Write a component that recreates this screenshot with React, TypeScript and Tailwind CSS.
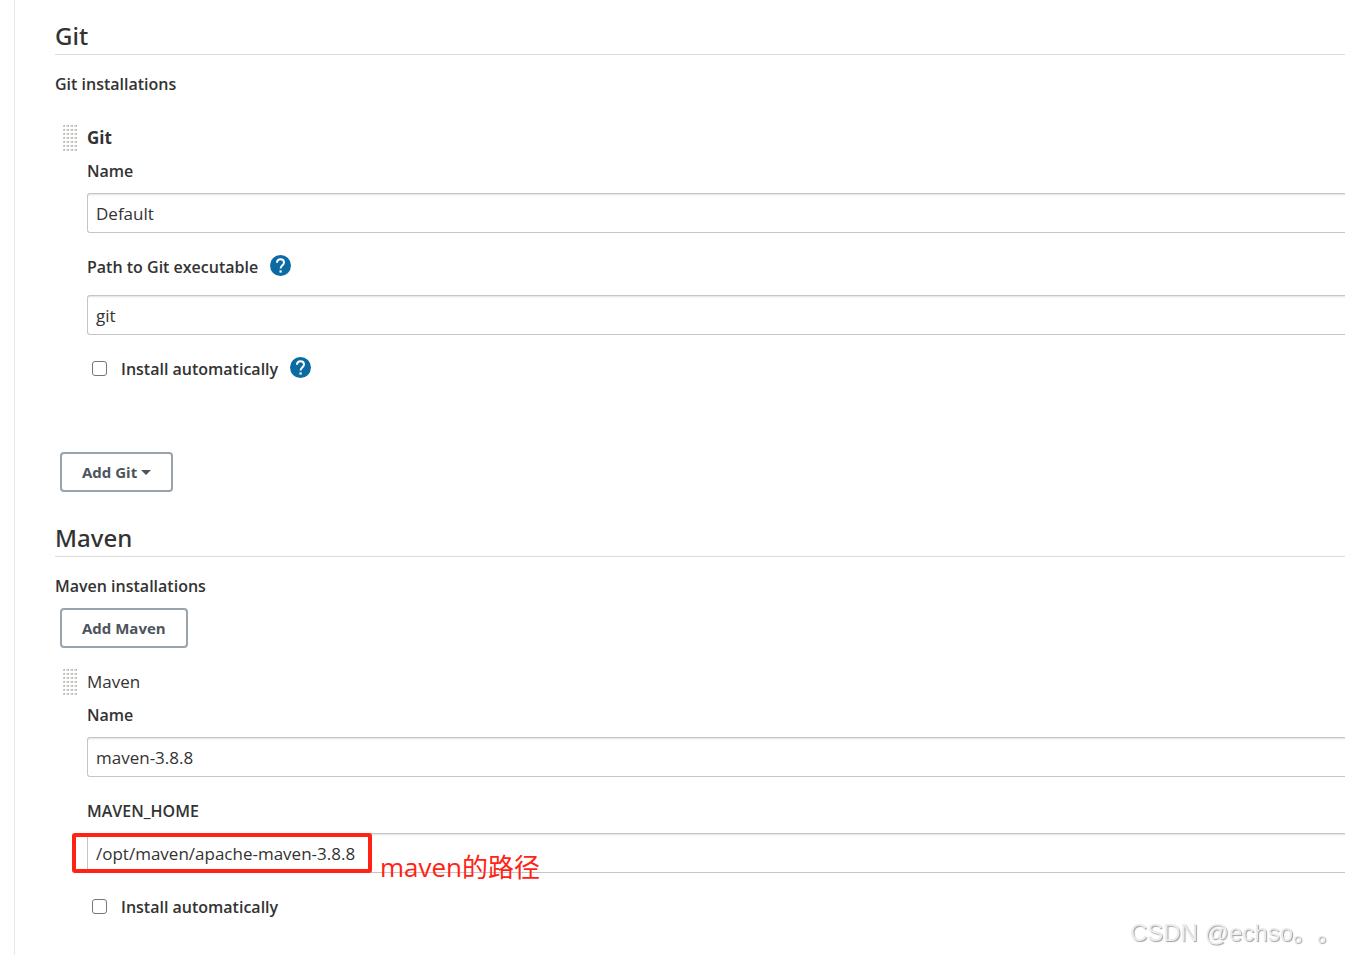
import type { ReactNode } from 'react';

const INPUT_CLASS =
  'block h-10 w-full rounded-l-[3px] border border-r-0 border-[#c5c5c5] bg-white px-2 text-[17px] text-[#333] shadow-[inset_0_2px_2px_-1px_rgba(0,0,0,0.12)] outline-none';

function DragHandle() {
  const rows = [0, 4, 8, 12, 16, 20, 24];
  const cols = [0, 4, 8, 12];
  return (
    <svg width="14" height="26" viewBox="0 0 14 26" className="shrink-0" aria-hidden="true">
      {rows.map((y) =>
        cols.map((x) => (
          <g key={`${x}-${y}`}>
            <rect x={x - 1} y={y} width="3" height="2" fill="#e3e2df" />
            <rect x={x} y={y} width="2" height="2" fill="#cfcdc9" />
            <rect x={x + 1} y={y} width="1" height="1" fill="#b0aeaa" />
          </g>
        ))
      )}
    </svg>
  );
}

function HelpButton({ topic }: { topic: string }) {
  return (
    <button type="button" aria-label={`Help for ${topic}`} className="ml-3 shrink-0">
      <svg width="21" height="21" viewBox="0 0 21 21" className="block">
        <circle cx="10.5" cy="10.5" r="10.5" fill="#0b6aa2" />
        <path
          d="M7 7.8c0-2.2 1.5-3.6 3.5-3.6s3.5 1.4 3.5 3.3c0 2.6-3.4 2.8-3.4 5.9"
          fill="none"
          stroke="#fff"
          strokeWidth="2"
        />
        <rect x="9.5" y="15.4" width="2.2" height="2.2" fill="#fff" />
      </svg>
    </button>
  );
}

function Section({ title, subtitle, children }: { title: string; subtitle: string; children: ReactNode }) {
  return (
    <section>
      <h2 className="border-b border-[#dcdcdc] font-['Noto_Sans',sans-serif] text-2xl leading-9 font-medium">
        {title}
      </h2>
      <h3 className="mt-[17px] text-base font-semibold">{subtitle}</h3>
      {children}
    </section>
  );
}

function ToolHeader({ title, bold }: { title: string; bold?: boolean }) {
  return (
    <div className="flex items-center gap-2.5 pl-2">
      <DragHandle />
      <span className={bold ? 'font-bold' : 'font-normal'}>{title}</span>
    </div>
  );
}

function Field({
  id,
  label,
  value,
  help,
  children,
}: {
  id: string;
  label: string;
  value: string;
  help?: boolean;
  children?: ReactNode;
}) {
  return (
    <div>
      <div className={help ? 'flex h-[30px] items-start' : 'flex h-6 items-start'}>
        <label htmlFor={id} className="text-base font-semibold">
          {label}
        </label>
        {help && <HelpButton topic={label} />}
      </div>
      <div className="relative mt-2.5">
        <input id={id} type="text" defaultValue={value} className={INPUT_CLASS} />
        {children}
      </div>
    </div>
  );
}

function InstallOption({ id, help }: { id: string; help?: boolean }) {
  return (
    <div className="flex h-6 items-start pl-[5px]">
      <input
        id={id}
        type="checkbox"
        className="mt-1 size-[15px] appearance-none rounded-[3px] border border-[#767676] bg-white checked:bg-[#0b6aa2]"
      />
      <label htmlFor={id} className="ml-3.5 text-base font-semibold">
        Install automatically
      </label>
      {help && <HelpButton topic="Install automatically" />}
    </div>
  );
}

function AddButton({ label, menu }: { label: string; menu?: boolean }) {
  return (
    <button
      type="button"
      className="ml-[5px] flex h-10 items-center rounded-[4px] border-2 border-[#98a4ad] bg-white px-5 text-[15px] font-bold text-[#4d545d]"
    >
      {label}
      {menu && (
        <svg width="10" height="5" viewBox="0 0 10 5" className="ml-1" aria-hidden="true">
          <path d="M0 0h10L5 5z" fill="#4d545d" />
        </svg>
      )}
    </button>
  );
}

export default function App() {
  return (
    <div className="min-h-screen overflow-hidden bg-white pl-3.5 font-['Open_Sans','Noto_Sans_CJK_SC',sans-serif] text-[17px] leading-6 text-[#333]">
      <main className="min-h-screen border-l border-[#e6eaed] pt-[18px] pl-10">
        <Section title="Git" subtitle="Git installations">
          <div className="mt-[29px]">
            <ToolHeader title="Git" bold />
            <div className="mt-2 flex flex-col gap-[22px] pl-8">
              <Field id="git-name" label="Name" value="Default" />
              <Field id="git-path" label="Path to Git executable" value="git" help />
              <InstallOption id="git-install" help />
            </div>
          </div>
          <div className="mt-[71px]">
            <AddButton label="Add Git" menu />
          </div>
        </Section>

        <div className="mt-7">
          <Section title="Maven" subtitle="Maven installations">
            <div className="mt-2.5">
              <AddButton label="Add Maven" />
            </div>
            <div className="mt-[21px]">
              <ToolHeader title="Maven" />
              <div className="mt-2 flex flex-col gap-[22px] pl-8">
                <Field id="maven-name" label="Name" value="maven-3.8.8" />
                <Field id="maven-home" label="MAVEN_HOME" value="/opt/maven/apache-maven-3.8.8">
                  <div className="pointer-events-none absolute top-0 -left-[15px] h-10 w-[300px] rounded-[3px] border-4 border-[#ff2314]" />
                  <p className="pointer-events-none absolute top-4 left-[293px] text-[26px] leading-9 whitespace-nowrap text-[#ff2314]">
                    maven的路径
                  </p>
                </Field>
                <InstallOption id="maven-install" />
              </div>
            </div>
          </Section>
        </div>
      </main>

      <p className="pointer-events-none fixed right-1 bottom-1 font-['Liberation_Sans','Noto_Sans_CJK_SC',sans-serif] text-2xl leading-9 whitespace-nowrap text-[#ececec] [text-shadow:1px_1px_1px_#a0a0a0] [text-spacing-trim:space-all]">
        CSDN @echso。。
      </p>
    </div>
  );
}
